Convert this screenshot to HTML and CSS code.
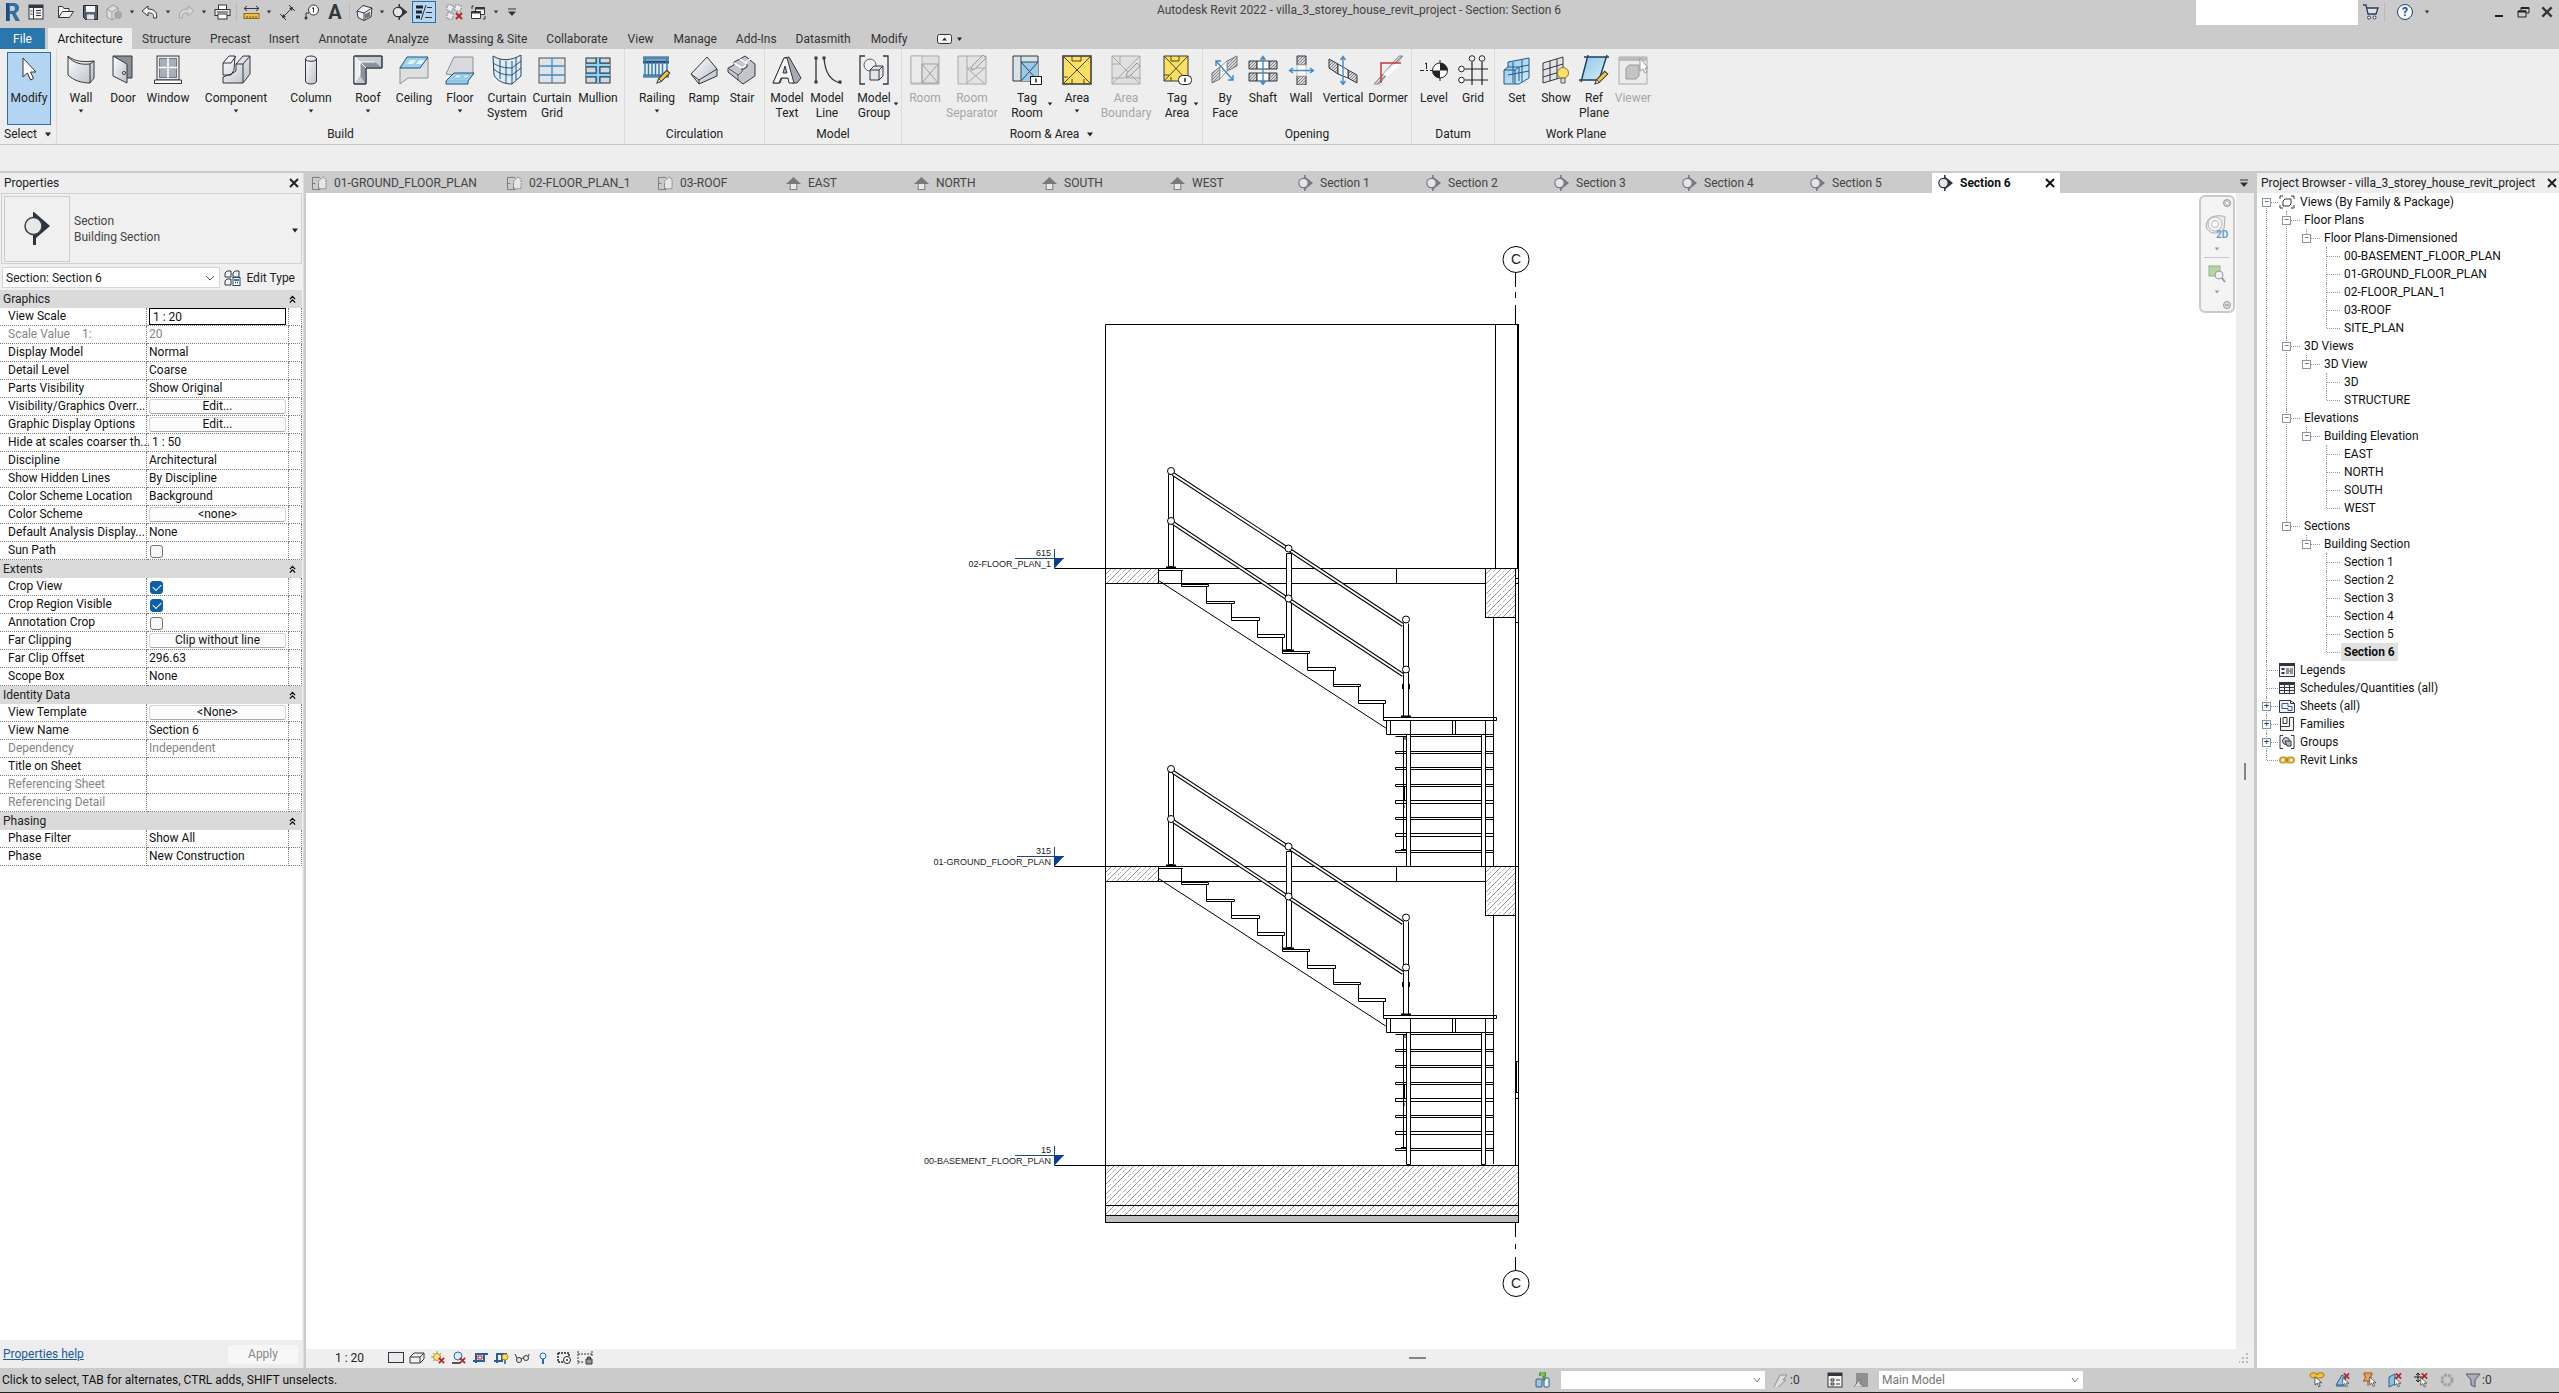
FILE: index.html
```html
<!DOCTYPE html>
<html lang="en">
<head>
<meta charset="utf-8">
<title>Autodesk Revit 2022 - villa_3_storey_house_revit_project - Section: Section 6</title>
<link rel="stylesheet" href="styles.css">
</head>
<body>
<svg class="defs" aria-hidden="true">
  <defs>
    <linearGradient id="shade" x1="0" y1="0" x2="1" y2="1"><stop offset="0" stop-color="#ffffff"/><stop offset="1" stop-color="#b9bec8"/></linearGradient>
    <linearGradient id="blue" x1="0" y1="0" x2="1" y2="1"><stop offset="0" stop-color="#8fc6e6"/><stop offset="1" stop-color="#d6ecf8"/></linearGradient>
    <pattern id="ihatch" width="3" height="3" patternUnits="userSpaceOnUse"><rect width="3" height="3" fill="#d4d6da"/><path d="M0 3L3 0" stroke="#6d7178" stroke-width=".8"/></pattern>
    <symbol id="pencil" viewBox="0 0 14 14"><path d="M1 13l1.5-4L10 1.2l2.8 2.6L5 11.500z" fill="#f6c945" stroke="#3c3c3c"/><path d="M1 13l1.500-4 2.500 2.500z" fill="#fff3c8" stroke="#3c3c3c" stroke-width=".8"/></symbol>
    <symbol id="plan" viewBox="0 0 18 16"><path d="M10 14.500H1.500v-13h8M1.500 8h3M8 8h3M8 8v6" fill="none" stroke="#77797d"/><path d="M9.500 3.500l4-2.500 2.500 3v9.500H8V6z" fill="#e6e6e6" stroke="#77797d" stroke-dasharray="2 1"/></symbol>
    <symbol id="elev" viewBox="0 0 18 16"><path d="M1 8.500L9 1l8 7.500z" fill="#77797d"/><rect x="5.500" y="8" width="7" height="6.500" fill="#e9e9e9" stroke="#77797d"/></symbol>
    <symbol id="sect" viewBox="0 0 16 16"><path d="M6.500 0H8v2l7.500 6L8 14v2H6.500z" fill="currentColor"/><circle cx="6" cy="8" r="4.700" fill="#e2e5ea" stroke="currentColor" stroke-width="1.200"/></symbol>
    <symbol id="down" viewBox="0 0 8 5"><path d="M1 .5h6L4 4.500z" fill="currentColor"/></symbol>
    <symbol id="cross" viewBox="0 0 12 12"><path d="M2 2l8 8M10 2l-8 8" stroke="currentColor" stroke-width="2" fill="none"/></symbol>
    <symbol id="redx" viewBox="0 0 8 8"><path d="M1 1l6 6M7 1L1 7" stroke="#b5242c" stroke-width="2"/></symbol>
    <symbol id="chev2" viewBox="0 0 8 9"><path d="M1 4l3-3 3 3M1 8l3-3 3 3" fill="none" stroke="#000" stroke-width="1.400"/></symbol>
    <symbol id="arrowcur" viewBox="0 0 10 16"><path d="M1 1v11l3-2.500 2 5 2-1-2-4.500h4z" fill="#fff" stroke="#333"/></symbol>
  </defs>
</svg>

<div class="app">
  <header class="titlebar">
    <div class="quick">
      <button class="q q-logo" aria-label="Revit"><svg width="16" height="20" viewBox="0 0 16 20"><path d="M2 1h7c4 0 6 2 6 5 0 2.500-1.500 4-3.500 5L16 19h-4.500L8 12H6v7H2z" fill="#2f6fa8"/><path d="M2 1h3v18H2z" fill="#1d4c7d"/><path d="M6 4v5h2.500C10.500 9 11 8 11 6.500S10.500 4 8.500 4z" fill="#cbcbcb"/></svg></button>
      <button class="q" aria-label="Home"><svg width="16" height="16" viewBox="0 0 16 16"><rect x="1" y="1" width="14" height="14" fill="#f4f4f4" stroke="#33363d"/><path d="M1 2.500h14" stroke="#33363d" stroke-width="3"/><path d="M5.500 3v12M8 6.500h5M8 9h5M8 11.500h5M2.500 7h2M2.500 10h2" stroke="#33363d"/></svg></button>
      <button class="q q-gap" aria-label="Open"><svg width="18" height="16" viewBox="0 0 18 16"><path d="M1.500 13.500v-11h4l1.500 2h5v3M1.500 13.500l4-6h11l-4 6z" fill="#f1f1f1" stroke="#33363d"/></svg></button>
      <button class="q" aria-label="Save"><svg width="17" height="17" viewBox="0 0 17 17"><path d="M1.500 1.500h14v14h-12l-2-2z" fill="#5a6070" stroke="#22252b"/><rect x="4" y="2" width="9" height="6" fill="#f7f7f7"/><rect x="5" y="10.500" width="7" height="5" fill="#dfe2e8"/></svg></button>
      <button class="q" aria-label="Synchronize"><svg width="17" height="17" viewBox="0 0 17 17"><path d="M1 5l6-4 5 3v8l-6 4-5-3z" fill="#dedede" stroke="#97999d"/><path d="M1 5l5 3v8M6 8l6-4" fill="none" stroke="#97999d"/><circle cx="12" cy="11" r="4" fill="#a6a8ab"/></svg></button>
      <button class="q-arrow" aria-label="Synchronize options"><svg width="6" height="4"><use href="#down"/></svg></button>
      <button class="q" aria-label="Undo"><svg width="18" height="14" viewBox="0 0 18 14"><path d="M7 1L1 6l6 5V8c4-.5 6 1 5.500 5h3C16.500 7 13 4 7 4z" fill="#f5f5f5" stroke="#33363d"/></svg></button>
      <button class="q-arrow" aria-label="Undo list"><svg width="6" height="4"><use href="#down"/></svg></button>
      <button class="q" aria-label="Redo"><svg width="18" height="14" viewBox="0 0 18 14"><path d="M11 1l6 5-6 5V8c-4-.5-6 1-5.500 5h-3C1.500 7 5 4 11 4z" fill="#d6d6d6" stroke="#a3a5a8"/></svg></button>
      <button class="q-arrow" aria-label="Redo list"><svg width="6" height="4"><use href="#down"/></svg></button>
      <button class="q" aria-label="Print"><svg width="17" height="16" viewBox="0 0 17 16"><rect x="4.500" y="1" width="8" height="5" fill="#fff" stroke="#33363d"/><rect x="1" y="5.500" width="15" height="6" fill="#e8e8ea" stroke="#33363d"/><rect x="4" y="10" width="9" height="5" fill="#fff" stroke="#33363d"/><path d="M3 8h11" stroke="#33363d"/></svg></button>
      <span class="q-sep"></span>
      <button class="q" aria-label="Measure"><svg width="17" height="17" viewBox="0 0 17 17"><path d="M1 4.500h15M4 2L1 4.500 4 7M13 2l3 2.500L13 7" fill="none" stroke="#33363d"/><rect x="1" y="9.500" width="15" height="5" fill="#f3bd48" stroke="#8a6a1c"/><path d="M4 12v2M7 12v2M10 12v2M13 12v2" stroke="#6b5010"/></svg></button>
      <button class="q-arrow" aria-label="Measure options"><svg width="6" height="4"><use href="#down"/></svg></button>
      <button class="q" aria-label="Aligned dimension"><svg width="17" height="17" viewBox="0 0 17 17"><path d="M1 10l6 6M10 1l6 6M4.500 12.500l8-8" stroke="#33363d" fill="none"/><path d="M3 14l1-4 3 3zM14 3l-1 4-3-3z" fill="#33363d"/></svg></button>
      <button class="q" aria-label="Tag by category"><svg width="17" height="17" viewBox="0 0 17 17"><circle cx="10.500" cy="6" r="5" fill="#fff" stroke="#33363d"/><path d="M10.500 3.500v5M9 4.500l1.500-1M6 9H3v4" fill="none" stroke="#33363d"/><circle cx="3" cy="14" r="1.500" fill="#33363d"/></svg></button>
      <button class="q q-text" aria-label="Text">A</button>
      <span class="q-sep"></span>
      <button class="q" aria-label="Default 3D view"><svg width="17" height="17" viewBox="0 0 17 17"><path d="M1 7l6-5.500L16 4l-1 9-7 3.500-6-3z" fill="#eef0f3" stroke="#33363d"/><path d="M1 7l7 2 8-5M8 9v7.500" fill="none" stroke="#33363d"/><path d="M9 10l5-2.500v5L9 15z" fill="#6f7785"/></svg></button>
      <button class="q-arrow" aria-label="3D view options"><svg width="6" height="4"><use href="#down"/></svg></button>
      <button class="q" aria-label="Section"><svg width="16" height="16"><use href="#sect"/></svg></button>
      <button class="q q-on" aria-label="Thin lines"><svg width="18" height="17" viewBox="0 0 18 17"><path d="M1 3h7M1 8h6M1 13h4" stroke="#20242c" stroke-width="3"/><path d="M11 1L6 16M12 3.500h5M11 8.500h6M10 13.500h7" stroke="#30343c" fill="none"/></svg></button>
      <button class="q q-gap" aria-label="Close inactive views"><svg width="17" height="17" viewBox="0 0 17 17"><path d="M1 1h6v6H1zM9 1h6v6H9zM1 9h6v6H1z" fill="#ededed" stroke="#83868b" stroke-dasharray="2 1"/><use href="#redx" x="9" y="8" width="8" height="8"/></svg></button>
      <button class="q" aria-label="Switch windows"><svg width="17" height="17" viewBox="0 0 17 17"><path d="M5.500 3.500h9v7h-9z" fill="#fff" stroke="#33363d"/><path d="M1.500 7.500h9v7h-9z" fill="#fff" stroke="#33363d"/><path d="M1.500 8.500h9M5 4.500h10" stroke="#33363d" stroke-width="2"/><path d="M2 5V2h2M15 12v3h-2" fill="none" stroke="#33363d"/></svg></button>
      <button class="q-arrow" aria-label="Window list"><svg width="6" height="4"><use href="#down"/></svg></button>
      <button class="q-arrow q-last" aria-label="Customize"><svg width="10" height="9" viewBox="0 0 10 9"><path d="M1 1h8" stroke="#333"/><path d="M1 3.500h8L5 8z" fill="#333"/></svg></button>
    </div>
    <h1 class="title">Autodesk Revit 2022 - villa_3_storey_house_revit_project - Section: Section 6</h1>
    <div class="winctl">
      <input class="search" type="text" aria-label="Search">
      <button class="q" aria-label="App store"><svg width="17" height="16" viewBox="0 0 17 16"><path d="M1 1h3l2 9h8l2-6H5" fill="#dfe3ec" stroke="#2c3c5c" stroke-width="1.300"/><circle cx="7" cy="13.500" r="1.500" fill="#fff" stroke="#2c3c5c"/><circle cx="12.500" cy="13.500" r="1.500" fill="#fff" stroke="#2c3c5c"/></svg></button>
      <span class="q-sep"></span>
      <button class="q help" aria-label="Help">?</button>
      <button class="q-arrow" aria-label="Help menu"><svg width="6" height="4"><use href="#down"/></svg></button>
      <span class="grow"></span>
      <button class="q" aria-label="Minimize"><svg width="12" height="12" viewBox="0 0 12 12"><path d="M2 10h8" stroke="#222" stroke-width="2"/></svg></button>
      <button class="q" aria-label="Restore"><svg width="13" height="12" viewBox="0 0 13 12"><path d="M4 4V1.500h8V7H9M1 5h8v6H1z" fill="none" stroke="#222"/><path d="M4 2h8M1 5.500h8" stroke="#222" stroke-width="2"/></svg></button>
      <button class="q" aria-label="Close"><svg width="14" height="14"><use href="#cross"/></svg></button>
    </div>
  </header>

  <nav class="menu">
    <button class="file">File</button>
    <button class="on">Architecture</button>
    <button>Structure</button><button class="tight">Precast</button><button class="tight">Insert</button><button>Annotate</button><button>Analyze</button><button class="tight">Massing &amp; Site</button><button>Collaborate</button><button>View</button><button>Manage</button><button class="tight">Add-Ins</button><button>Datasmith</button><button>Modify</button>
    <button class="collapse" aria-label="Ribbon display"><svg width="26" height="10" viewBox="0 0 26 10"><rect x=".5" y=".5" width="14" height="9" rx="2" fill="#f2f2f2" stroke="#333"/><path d="M5 6.500h5L7.500 3.500z" fill="#333"/><path d="M20 3.500h5l-2.500 3.500z" fill="#222"/></svg></button>
  </nav>

  <div class="ribbon">
    <section class="panel p-select">
      <div class="tools">
        <button class="tool modify"><svg viewBox="0 0 30 30"><path d="M9 3v19l4.500-4 3 7 3-1.500-3-6.500H22z" fill="#fff" stroke="#333"/></svg><span>Modify</span></button>
      </div>
      <h2>Select <svg width="8" height="5"><use href="#down"/></svg></h2>
    </section>
    <section class="panel p-build">
      <div class="tools">
        <button class="tool w42"><svg viewBox="0 0 30 30"><path d="M2 1c7 6 15 6 26 5v17l-4 5C15 28 7 25 2 20z" fill="url(#shade)" stroke="#33363d"/><path d="M2 2c6 6 13 8 22 7l4-3M24 9v19" fill="none" stroke="#33363d"/></svg><span>Wall</span><svg class="dd"><use href="#down"/></svg></button>
        <button class="tool w42"><svg viewBox="0 0 30 30"><path d="M5 1h19v22h-5" fill="#8b9098" stroke="#33363d"/><path d="M5 1l14 8v19L5 21z" fill="url(#shade)" stroke="#33363d"/><circle cx="16" cy="18" r="1.500" fill="#fff" stroke="#333"/></svg><span>Door</span></button>
        <button class="tool w48"><svg viewBox="0 0 30 30"><rect x="4" y="1" width="22" height="24" fill="#eceef1" stroke="#33363d"/><rect x="6.500" y="3.500" width="17" height="19" fill="#a9afb9" stroke="#70757e"/><path d="M15 3v20M6 12.500h18" stroke="#fff" stroke-width="1.500"/><path d="M1.500 25h27v3.500h-27z" fill="#fff" stroke="#33363d"/></svg><span>Window</span></button>
        <button class="tool w88"><svg viewBox="0 0 30 30"><path d="M2 8l6-7h6l-1 14-3 5H2zM15 9l7-8h7v18l-7 9H2v-6l8-3 5-3z" fill="url(#shade)" stroke="#33363d"/><path d="M15 9h7v19M22 9l7-8M2 8h8M10 8l5-7" fill="none" stroke="#33363d"/></svg><span>Component</span><svg class="dd"><use href="#down"/></svg></button>
        <button class="tool w62"><svg viewBox="0 0 30 30"><path d="M9.500 4c0-4 11-4 11 0v22c0 4-11 4-11 0z" fill="url(#shade)" stroke="#33363d"/><path d="M9.500 4c0 3 11 3 11 0" fill="none" stroke="#33363d"/></svg><span>Column</span><svg class="dd"><use href="#down"/></svg></button>
        <button class="tool w52"><svg viewBox="0 0 30 30"><path d="M1 1h28v12H13v16H1z" fill="#c6cad2" stroke="#33363d"/><path d="M1 1l6 6v14l-6 8z" fill="#edeff2"/><path d="M7 7h15l7 6H13v16l-6-8z" fill="#8b919e"/><path d="M1 1l12 12M7 7h15M7 7v14" fill="none" stroke="#fff"/><path d="M1 1h28v12H13v16H1z" fill="none" stroke="#33363d"/></svg><span>Roof</span><svg class="dd"><use href="#down"/></svg></button>
        <button class="tool w40"><svg viewBox="0 0 30 30"><path d="M1 12h19l9-9v20H9l-8 6z" fill="#dedfe1" stroke="#8b8f96"/><path d="M8 2h21l-8 11H1z" fill="#9ed0ec" stroke="#25527a"/><path d="M11 5h6l-3 4H8zM20 5h6l-3 4h-6z" fill="#e3f3fb"/></svg><span>Ceiling</span></button>
        <button class="tool w52"><svg viewBox="0 0 30 30"><path d="M1 19L9 2h19v18H9z" fill="#d9dadd" stroke="#8b8f96"/><path d="M9 18h20l-6 8v3H1v-3z" fill="#9ed0ec" stroke="#25527a"/><path d="M1 26h22M11 20h6l-3 3H9zM20 20h5l-3 3h-5z" fill="#e3f3fb" stroke="#5a9cc6" stroke-width=".5"/></svg><span>Floor</span><svg class="dd"><use href="#down"/></svg></button>
        <button class="tool w42"><svg viewBox="0 0 30 30"><path d="M1 1c8 5 18 5 28-1v21l-9 8C12 29 5 26 2 20z" fill="#dcebf5" stroke="#2d4052"/><path d="M20 6v23M8 4v20M14 6v22M24 3v22M1 8c6 4 12 5 19 5l9-7M2 14c5 5 11 6 18 6l9-7" fill="none" stroke="#25527a"/></svg><span>Curtain<br>System</span></button>
        <button class="tool w48"><svg viewBox="0 0 30 30"><rect x="2" y="3" width="26" height="25" fill="#dfe4ea" stroke="#4b4f57"/><path d="M15 3v25M2 11h26M2 20h26" stroke="#3d8ac2" stroke-width="1.300"/></svg><span>Curtain<br>Grid</span></button>
        <button class="tool w44"><svg viewBox="0 0 30 30"><rect x="3" y="3" width="24" height="25" fill="#d2d8df" stroke="#2b2f37"/><path d="M3 10h24M3 20h24M15 3v25" stroke="#1b3e5c" stroke-width="5"/><path d="M3 10h24M3 20h24M15 3v25" stroke="#8fd3ef" stroke-width="2.500"/></svg><span>Mullion</span></button>
      </div>
      <h2>Build</h2>
    </section>
    <section class="panel p-circ">
      <div class="tools">
        <button class="tool w46"><svg viewBox="0 0 30 30"><path d="M1 3h26M1 7h26M1 21h26" stroke="#1f4f7a" stroke-width="3"/><path d="M1 3h26M1 21h26" stroke="#7fc0e4"/><path d="M3 3v18M6.500 7v14M10 7v14M13.500 7v14M17 7v14M20.500 7v14M25 3v18" stroke="#2f7db5" stroke-width="1.500"/><use href="#pencil" x="14" y="14" width="15" height="15"/></svg><span>Railing</span><svg class="dd"><use href="#down"/></svg></button>
        <button class="tool w48"><svg viewBox="0 0 30 30"><path d="M2 19L18 2l10 12v7L10 29z" fill="url(#shade)" stroke="#33363d"/><path d="M10 25l18-11M10 25v4M2 19l8 6" fill="none" stroke="#33363d"/></svg><span>Ramp</span></button>
        <button class="tool w28"><svg viewBox="0 0 30 30"><path d="M1 13l6-3V7l6-3 5-3 10 8v12l-12 8L1 17z" fill="#c2c5cc" stroke="#33363d"/><path d="M1 13l10 7 4-3v-4l4-3V7l4-3M7 8l8 5M13 4l7 5M11 20v4" fill="none" stroke="#fff" stroke-width="1.500"/><path d="M1 13l10 7v5M15 13v4l-4 3M20 9v3l-5 3" fill="none" stroke="#33363d"/></svg><span>Stair</span></button>
      </div>
      <h2>Circulation</h2>
    </section>
    <section class="panel p-model">
      <div class="tools">
        <button class="tool w40"><svg viewBox="0 0 30 30"><path d="M1 28L12 3l5-1 12 21-4 5h-5l-2-5h-8l-2 5z" fill="#a7abb5" stroke="#33363d"/><path d="M1 28L12 3h3l7 25h-5l-1-5H9l-2 5zM11 18h4l-2-7z" fill="#f7f7f8" stroke="#33363d" fill-rule="evenodd"/></svg><span>Model<br>Text</span></button>
        <button class="tool w40"><svg viewBox="0 0 30 30"><path d="M4 3v24M12 3c1 14 6 23 17 25" fill="none" stroke="#33363d" stroke-width="1.300"/><path d="M2.500 1.500h3v3h-3zM2.500 25.500h3v3h-3zM10.500 1.500h3v3h-3zM26.500 25.500h3v3h-3z" fill="#33363d"/></svg><span>Model<br>Line</span></button>
        <button class="tool w54 side"><svg viewBox="0 0 30 30"><path d="M6 1H1v28h5M24 1h5v28h-5" fill="none" stroke="#33363d" stroke-width="1.300"/><circle cx="11" cy="10" r="6" fill="#eef0f2" stroke="#5c6068"/><path d="M11 15l4-4h9v10l-4 4h-9z" fill="#e3e5e9" stroke="#33363d"/><path d="M11 15h9v10M20 15l4-4" fill="none" stroke="#33363d"/></svg><span>Model<br>Group</span><svg class="dd"><use href="#down"/></svg></button>
      </div>
      <h2>Model</h2>
    </section>
    <section class="panel p-room">
      <div class="tools">
        <button class="tool w40" disabled><svg viewBox="0 0 30 30"><path d="M1 1h28v28H1z" fill="#e0e0e0" stroke="#a9a9a9"/><path d="M1 1h11v27H1z" fill="#ebebeb" stroke="#b5b5b5"/><path d="M12 9h16v19H12zM12 9l16 19M28 9L12 28" fill="none" stroke="#9f9f9f"/></svg><span>Room</span></button>
        <button class="tool w54" disabled><svg viewBox="0 0 30 30"><path d="M1 1h28v28H1z" fill="#e3e3e3" stroke="#a9a9a9"/><path d="M10 1v28M10 13h18M10 13l18 16M28 13L10 28" fill="none" stroke="#a9a9a9"/><path d="M14 15l1-4L26 0l3 3-11 11z" fill="#ddd" stroke="#999"/></svg><span>Room<br>Separator</span></button>
        <button class="tool w56 side"><svg viewBox="0 0 30 30"><path d="M1 1h25v25H1z" fill="#dbe2e8" stroke="#33363d"/><path d="M9 7h17v19H9z" fill="#9cc9e4"/><path d="M9 1v25M9 7h17M9 7l17 19M26 7L9 26" fill="none" stroke="#2c4a63"/><rect x="18.500" y="21.500" width="11" height="8" fill="#fff" stroke="#222"/><path d="M24 23.500v4" stroke="#222" stroke-width="1.500"/></svg><span>Tag<br>Room</span><svg class="dd"><use href="#down"/></svg></button>
        <button class="tool w44"><svg viewBox="0 0 30 30"><path d="M1 1h28v28H1z" fill="#fadf63" stroke="#33363d" stroke-width="1.500"/><path d="M1 1l28 28M29 1L1 29M10 1v5h9M19 1v5M1 22h5M10 24v5M22 29v-5" fill="none" stroke="#4f461d"/></svg><span>Area</span><svg class="dd"><use href="#down"/></svg></button>
        <button class="tool w54" disabled><svg viewBox="0 0 30 30"><path d="M1 1h28v28H1z" fill="#e0e0e0" stroke="#a9a9a9"/><path d="M1 1l28 28M29 1L1 29M9 1v8H1M1 23h28" fill="none" stroke="#a9a9a9"/><path d="M15 22l1-4L26 8l3 3-10 10z" fill="#ddd" stroke="#999"/></svg><span>Area<br>Boundary</span></button>
        <button class="tool w48 side"><svg viewBox="0 0 30 30"><path d="M2 1h24v25H2z" fill="#fadf63" stroke="#33363d"/><path d="M2 1l24 25M26 1L2 26M9 1v5h8V1M2 20h5M9 26v-4" fill="none" stroke="#4f461d"/><rect x="16.500" y="20.500" width="13" height="9" rx="4" fill="#fff" stroke="#222"/><path d="M23 23v4" stroke="#222" stroke-width="1.500"/></svg><span>Tag<br>Area</span><svg class="dd"><use href="#down"/></svg></button>
      </div>
      <h2>Room &amp; Area <svg width="8" height="5"><use href="#down"/></svg></h2>
    </section>
    <section class="panel p-open">
      <div class="tools">
        <button class="tool w40"><svg viewBox="0 0 30 30"><path d="M2 28V18l8-6v12zM17 16V6l10-5v10z" fill="url(#ihatch)" stroke="#70747b"/><path d="M10 12l7-6v10l-7 8z" fill="#fff" stroke="#999"/><path d="M6 6l17 19M6 11V6h5M23 20v5h-5" fill="none" stroke="#3f8cc9" stroke-width="1.400"/></svg><span>By<br>Face</span></button>
        <button class="tool w36"><svg viewBox="0 0 30 30"><path d="M1 6h8v8H1zM21 6h8v8h-8zM1 18h8v8H1zM21 18h8v8h-8z" fill="url(#ihatch)" stroke="#33363d"/><path d="M9 6h12v8H9zM9 18h12v8H9z" fill="#fff" stroke="#33363d"/><path d="M15 2v27M12.500 5L15 1.500 17.500 5M12.500 26l2.500 3.500 2.500-3.500" fill="none" stroke="#3f8cc9" stroke-width="1.400"/></svg><span>Shaft</span></button>
        <button class="tool w40"><svg viewBox="0 0 30 30"><path d="M11 1h9v9h-9zM11 21h9v9h-9z" fill="url(#ihatch)" stroke="#33363d"/><path d="M11 10h9v11h-9z" fill="#fff" stroke="#bbb"/><path d="M4 15.500h23M7 13l-3.500 2.500L7 18M24 13l3.500 2.500L24 18" fill="none" stroke="#3f8cc9" stroke-width="1.400"/></svg><span>Wall</span></button>
        <button class="tool w44"><svg viewBox="0 0 30 30"><path d="M1 4l9 5v10l-9-6zM20 15l9 5v8l-9-5z" fill="url(#ihatch)" stroke="#33363d"/><path d="M10 9l10 6v8l-10-4z" fill="#fff" stroke="#33363d"/><path d="M15 2v26M12.500 5L15 1.500 17.500 5M12.500 26l2.500 3.500 2.500-3.500" fill="none" stroke="#3f8cc9" stroke-width="1.400"/></svg><span>Vertical</span></button>
        <button class="tool w46"><svg viewBox="0 0 30 30"><path d="M1 29L26 1h4L6 29z" fill="url(#ihatch)" stroke="#8b8f96"/><path d="M10 19L22 8h6L14 22z" fill="#fff"/><path d="M8 28V8h20" fill="none" stroke="#c23a38" stroke-width="1.500"/></svg><span>Dormer</span></button>
      </div>
      <h2>Opening</h2>
    </section>
    <section class="panel p-datum">
      <div class="tools">
        <button class="tool w40"><svg viewBox="0 0 30 30"><path d="M1 15.500h4M7 15.500h2M11 15.500h18M6 9l1.500-1V14M21 5v21" fill="none" stroke="#222"/><circle cx="21" cy="15.500" r="7.500" fill="#fff" stroke="#222"/><path d="M21 8v15a7.500 7.500 0 0 1-7.500-7.500h15A7.500 7.500 0 0 0 21 8z" fill="#222"/></svg><span>Level</span></button>
        <button class="tool w38"><svg viewBox="0 0 30 30"><path d="M14 7v23M24 7v23M7 14h23M7 25h23" stroke="#222" stroke-width="1.200"/><g fill="#fff" stroke="#222"><circle cx="14" cy="3.500" r="2.800"/><circle cx="24" cy="3.500" r="2.800"/><circle cx="3.500" cy="14" r="2.800"/><circle cx="3.500" cy="25" r="2.800"/></g></svg><span>Grid</span></button>
      </div>
      <h2>Datum</h2>
    </section>
    <section class="panel p-work">
      <div class="tools">
        <button class="tool w40"><svg viewBox="0 0 30 30"><path d="M2 15l4-3V7l21-4v20l-10 6H2z" fill="url(#blue)" stroke="#1f5b88"/><path d="M2 15h11v14M13 15l4-3v14M6 12h11l10-2M6 20l21-4M11 7v21M20 5v22" fill="none" stroke="#1f5b88"/></svg><span>Set</span></button>
        <button class="tool w38"><svg viewBox="0 0 30 30"><path d="M2 8l20-6v20L2 28z" fill="#e3e4e8" stroke="#33363d"/><path d="M9 6v20M16 4v20M2 15l20-6M2 22l20-6" stroke="#33363d"/><circle cx="22" cy="18" r="5.500" fill="#ffe16a" stroke="#8d7a24"/><path d="M20 23h4v5h-4z" fill="#ddd" stroke="#555"/></svg><span>Show</span></button>
        <button class="tool w38"><svg viewBox="0 0 30 30"><path d="M8 2h20L21 25H2z" fill="url(#blue)"/><path d="M9 0L2 27M28 0l-7 22M5 2h25M0 25h18" fill="none" stroke="#1d3f5c" stroke-width="1.400"/><use href="#pencil" x="15" y="15" width="15" height="15"/></svg><span>Ref<br>Plane</span></button>
        <button class="tool w40" disabled><svg viewBox="0 0 30 30"><path d="M1 2h28v27H1z" fill="#ececec" stroke="#a9a9a9"/><path d="M1 4h28" stroke="#bcbcbc" stroke-width="4"/><path d="M8 13l3-3h10v11l-3 3H8z" fill="#c4c4c4" stroke="#999"/><path d="M22 3v13l3-2 2 4 2-1-2-4h3z" fill="#fff" stroke="#999"/></svg><span>Viewer</span></button>
      </div>
      <h2>Work Plane</h2>
    </section>
  </div>
  <div class="options"></div>

  <main class="work">
    <aside class="props">
      <header class="phead"><h2>Properties</h2><button aria-label="Close properties"><svg width="12" height="12"><use href="#cross"/></svg></button></header>
      <div class="type">
        <div class="thumb"><svg width="32" height="34" viewBox="0 0 32 34"><path d="M10 0l16 14-14 12v7h-3V0z" fill="#2f333b"/><circle cx="9.500" cy="14" r="8.500" fill="#e6e8ec" stroke="#3b3f47" stroke-width="1.500"/></svg></div>
        <p>Section<br>Building Section</p>
        <button aria-label="Type list"><svg width="8" height="5"><use href="#down"/></svg></button>
      </div>
      <div class="inst">
        <div class="combo"><select aria-label="Instance"><option>Section: Section 6</option></select><svg width="10" height="6" viewBox="0 0 10 6"><path d="M1 1l4 4 4-4" fill="none" stroke="#555"/></svg></div>
        <button><svg width="17" height="16" viewBox="0 0 17 16"><path d="M1 3l2-2h4v6H1zM9 3l2-2h4v6H9zM1 11l2-2h4v6H1z" fill="#f3f3f3" stroke="#33363d"/><rect x="9" y="7.500" width="7" height="8" fill="#fff" stroke="#1d4c7d"/><path d="M10 10h5M11 12.500h1M13 12.500h1" stroke="#1d4c7d" stroke-width="1.500"/></svg>Edit Type</button>
      </div>
      <div class="grid">
        <table>
          <colgroup><col class="c-name"><col><col class="c-end"></colgroup>
          <tbody>
            <tr class="grp"><th colspan="3">Graphics <svg width="7" height="9"><use href="#chev2"/></svg></th></tr>
            <tr><td><label for="p1">View Scale</label></td><td><input class="boxed" id="p1" type="text" value="1 : 20"></td><td></td></tr>
            <tr class="dim"><td>Scale Value &nbsp;&nbsp; 1:</td><td>20</td><td></td></tr>
            <tr><td>Display Model</td><td>Normal</td><td></td></tr>
            <tr><td>Detail Level</td><td>Coarse</td><td></td></tr>
            <tr><td>Parts Visibility</td><td>Show Original</td><td></td></tr>
            <tr><td>Visibility/Graphics Overr...</td><td><button>Edit...</button></td><td></td></tr>
            <tr><td>Graphic Display Options</td><td><button>Edit...</button></td><td></td></tr>
            <tr><td>Hide at scales coarser th...</td><td class="in">1 : 50</td><td></td></tr>
            <tr><td>Discipline</td><td>Architectural</td><td></td></tr>
            <tr><td>Show Hidden Lines</td><td>By Discipline</td><td></td></tr>
            <tr><td>Color Scheme Location</td><td>Background</td><td></td></tr>
            <tr><td>Color Scheme</td><td><button>&lt;none&gt;</button></td><td></td></tr>
            <tr><td>Default Analysis Display...</td><td>None</td><td></td></tr>
            <tr><td><label for="c1">Sun Path</label></td><td><input id="c1" type="checkbox"></td><td></td></tr>
          </tbody>
          <tbody>
            <tr class="grp"><th colspan="3">Extents <svg width="7" height="9"><use href="#chev2"/></svg></th></tr>
            <tr><td><label for="c2">Crop View</label></td><td><input id="c2" type="checkbox" checked></td><td></td></tr>
            <tr><td><label for="c3">Crop Region Visible</label></td><td><input id="c3" type="checkbox" checked></td><td></td></tr>
            <tr><td><label for="c4">Annotation Crop</label></td><td><input id="c4" type="checkbox"></td><td></td></tr>
            <tr><td>Far Clipping</td><td><button>Clip without line</button></td><td></td></tr>
            <tr><td>Far Clip Offset</td><td>296.63</td><td></td></tr>
            <tr><td>Scope Box</td><td>None</td><td></td></tr>
          </tbody>
          <tbody>
            <tr class="grp"><th colspan="3">Identity Data <svg width="7" height="9"><use href="#chev2"/></svg></th></tr>
            <tr><td>View Template</td><td><button>&lt;None&gt;</button></td><td></td></tr>
            <tr><td>View Name</td><td>Section 6</td><td></td></tr>
            <tr class="dim"><td>Dependency</td><td>Independent</td><td></td></tr>
            <tr><td>Title on Sheet</td><td></td><td></td></tr>
            <tr class="dim"><td>Referencing Sheet</td><td></td><td></td></tr>
            <tr class="dim"><td>Referencing Detail</td><td></td><td></td></tr>
          </tbody>
          <tbody>
            <tr class="grp"><th colspan="3">Phasing <svg width="7" height="9"><use href="#chev2"/></svg></th></tr>
            <tr><td>Phase Filter</td><td>Show All</td><td></td></tr>
            <tr><td>Phase</td><td>New Construction</td><td></td></tr>
          </tbody>
        </table>
      </div>
      <footer class="pfoot"><a href="#help">Properties help</a><button disabled>Apply</button></footer>
    </aside>

    <section class="view">
      <div class="tabs">
        <button class="t1"><svg width="17" height="15"><use href="#plan"/></svg>01-GROUND_FLOOR_PLAN</button>
        <button class="t2"><svg width="17" height="15"><use href="#plan"/></svg>02-FLOOR_PLAN_1</button>
        <button><svg width="17" height="15"><use href="#plan"/></svg>03-ROOF</button>
        <button><svg width="17" height="15"><use href="#elev"/></svg>EAST</button>
        <button><svg width="17" height="15"><use href="#elev"/></svg>NORTH</button>
        <button><svg width="17" height="15"><use href="#elev"/></svg>SOUTH</button>
        <button><svg width="17" height="15"><use href="#elev"/></svg>WEST</button>
        <button><svg width="17" height="16"><use href="#sect"/></svg>Section 1</button>
        <button><svg width="17" height="16"><use href="#sect"/></svg>Section 2</button>
        <button><svg width="17" height="16"><use href="#sect"/></svg>Section 3</button>
        <button><svg width="17" height="16"><use href="#sect"/></svg>Section 4</button>
        <button><svg width="17" height="16"><use href="#sect"/></svg>Section 5</button>
        <button class="on"><svg width="17" height="16"><use href="#sect"/></svg>Section 6<svg class="x" width="12" height="12"><use href="#cross"/></svg></button>
        <button class="more" aria-label="Tab list"><svg width="10" height="9" viewBox="0 0 10 9"><path d="M1 1h8" stroke="#333"/><path d="M1 3.500h8L5 8z" fill="#333"/></svg></button>
      </div>
      <div class="stage">
        <div class="canvas">
          <svg class="drawing" viewBox="306 193 1930 1156" role="img" aria-label="Section 6 through the staircase">
            <defs>
              <pattern id="hatch" width="10" height="10" patternUnits="userSpaceOnUse">
                <path d="M-2.500 2.500l5-5M0 10L10 0M7.500 12.500l5-5" stroke="#777" stroke-width=".8"/>
                <path d="M-1 6L6 -1M4 11l7-7" stroke="#999" stroke-width=".8" stroke-dasharray="3 2"/>
              </pattern>
              <g id="storey">
                <path d="M1105.500 568.500H1518M1105.500 583.500H1485.500M1396.500 568.500V583.500"/>
                <rect x="1105.500" y="568.500" width="53" height="15" fill="url(#hatch)"/>
                <rect x="1485.500" y="568.500" width="30" height="49" fill="url(#hatch)"/>
                <path d="M1158.500 570.500v10M1158.500 570.500H1183M1181.500 570.500V586"/>
                <path d="M1158.500 580.500L1386.500 728.500"/>
                <path fill="#fff" d="M1181.500 584.500h27v2h-27zM1206.500 601.500h28v2h-28zM1231.500 617.500h28v3h-28zM1257.500 634.500h27v3h-27zM1282.500 651.500h27v2h-27zM1307.500 667.500h28v3h-28zM1333.500 684.500h27v2h-27zM1358.500 700.500h27v3h-27z"/>
                <path d="M1206.500 587v15M1231.500 604v14M1257.500 620v15M1282.500 637v15M1307.500 654v14M1333.500 670v15M1358.500 687v14M1383.500 703v15"/>
                <path d="M1166 567.500h10M1283 650.500h11M1401 716.500h10" stroke-width="2"/>
                <path fill="#fff" d="M1168.500 474.500h5v92h-5zM1286.500 553.500h5v96h-5z"/>
                <path d="M1403.500 623.500v93M1408.500 623.500v93M1402.500 684v5M1409.500 684v5"/>
                <g class="rail"><path d="M1173 474L1288 549L1403 625M1173 523L1288 599L1403 675"/><path class="core" d="M1173 474L1288 549L1403 625M1173 523L1288 599L1403 675"/></g>
                <g fill="#fff"><circle cx="1171" cy="471" r="3.500"/><circle cx="1171" cy="521" r="3.500"/><circle cx="1288.500" cy="548.500" r="3.500"/><circle cx="1288.500" cy="598.500" r="3.500"/><circle cx="1406" cy="619.500" r="3.500"/><circle cx="1406" cy="669.500" r="3.500"/></g>
                <path d="M1383.500 717.500H1496.500v3H1383.500zM1386.500 720.500h107v14h-107zM1390.500 720.500v14M1410.500 720.500v14M1452.500 720.500v14M1455.500 720.500v14M1485.500 720.500v14"/>
                <path d="M1493.500 617.500V866M1395.500 736.500h98"/>
                <path d="M1493.500 751.500h-98v2h98M1493.500 767.500h-98v2h98M1493.500 784.500h-98v2h98M1493.500 800.500h-98v3h98M1493.500 817.500h-98v2h98M1493.500 833.500h-98v3h98M1493.500 850.500h-98v2h98"/>
                <path d="M1403.500 737V850M1404.500 787v14M1405 736v4M1404 805v3M1401 849.500h5"/>
                <path fill="#fff" d="M1406.500 734.500h4v132h-4zM1481.500 734.500h4v132h-4z"/>
              </g>
            </defs>
            <g class="ink">
              <path d="M1105.500 1165V324.500H1518.500M1495.500 324.500V568"/>
              <path d="M1518 324V568" stroke-width="2"/>
              <path d="M1515.500 568V1165M1518.500 568V1222M1515 578.500h4M1515 583.500h4M1515 622.500h4"/>
              <use href="#storey"/>
              <use href="#storey" y="298"/>
              <path d="M1516.500 1062v30M1515 1061.500h4M1515 1092.500h4M1515 1098.500h4"/>
              <rect x="1105.500" y="1165.500" width="413" height="40" fill="url(#hatch)"/>
              <rect x="1105.500" y="1205.500" width="413" height="10" fill="url(#hatch)"/>
              <rect x="1105.500" y="1215.500" width="413" height="7" fill="#bfbfbf"/>
              <path d="M1515.500 273v14M1515.500 292v6M1515.500 305v19M1515.500 1222v15M1515.500 1244v5M1515.500 1257v13"/>
              <circle cx="1516" cy="259.500" r="13"/><circle cx="1516" cy="1283.500" r="13"/>
              <path d="M1054.500 568.500H1105M1054.500 866.500H1105M1054.500 1165.500H1105"/>
            </g>
            <g class="heads">
              <path d="M1015 558.500h49M1054.500 549v19M1017 856.500h47M1054.500 847v19M1015 1155.500h49M1054.500 1146v19"/>
              <path class="solid" d="M1054 558h10l-10 11zM1054 856h10l-10 11zM1054 1155h10l-10 11z"/>
              <path class="cut" d="M1063 560l-6 7M1063 858l-6 7M1063 1157l-6 7"/>
            </g>
            <g class="lvl">
              <text x="1051" y="556">615</text><text x="1051" y="567">02-FLOOR_PLAN_1</text>
              <text x="1051" y="854">315</text><text x="1051" y="865">01-GROUND_FLOOR_PLAN</text>
              <text x="1051" y="1153">15</text><text x="1051" y="1164">00-BASEMENT_FLOOR_PLAN</text>
            </g>
            <g class="bub"><text x="1516" y="264">C</text><text x="1516" y="1288">C</text></g>
          </svg>
          <div class="navbar">
            <button class="r" aria-label="Close navigation bar"><svg width="8" height="8" viewBox="0 0 8 8"><circle cx="4" cy="4" r="3.500" fill="#ccc" stroke="#999"/><path d="M2.500 2.500l3 3M5.500 2.500l-3 3" stroke="#fff"/></svg></button>
            <button aria-label="Steering wheel"><svg width="26" height="26" viewBox="0 0 26 26"><path d="M4 6c3-5 14-5 17-3l-1 12c-3 5-13 5-15 2-4-3-3-8-1-11z" fill="#ececee" stroke="#a9acb2"/><circle cx="11" cy="10" r="7" fill="#f6f6f6" stroke="#b2b5bb"/><circle cx="11" cy="10" r="3.500" fill="#fff" stroke="#b2b5bb"/><text x="12" y="24" class="two">2D</text></svg></button>
            <button aria-label="Steering wheel options"><svg width="6" height="4"><use href="#down"/></svg></button>
            <hr>
            <button aria-label="Zoom in region"><svg width="18" height="18" viewBox="0 0 18 18"><rect x="1" y="1" width="11" height="10" fill="#b4d6a5" stroke="#90b383"/><circle cx="11" cy="10" r="4" fill="#f0f3f6" stroke="#9499a3"/><path d="M14 13l3 4" stroke="#9499a3" stroke-width="2"/></svg></button>
            <button aria-label="Zoom options"><svg width="6" height="4"><use href="#down"/></svg></button>
            <button class="r" aria-label="Customize navigation bar"><svg width="8" height="8" viewBox="0 0 8 8"><circle cx="4" cy="4" r="3.500" fill="#ddd" stroke="#999"/><path d="M2 4h4" stroke="#888"/></svg></button>
          </div>
        </div>
        <div class="vscroll"><span></span></div>
      </div>
      <div class="viewbar">
        <span class="scale">1 : 20</span>
        <button aria-label="Detail level"><svg viewBox="0 0 16 14"><rect x=".5" y="1.500" width="15" height="10" fill="#e9ebee" stroke="#33363d"/></svg></button>
        <button aria-label="Visual style"><svg viewBox="0 0 16 14"><path d="M1 6l4-4h10v6l-4 4H1zM1 6h10v6M11 6l4-4" fill="#f1f1f1" stroke="#33363d"/></svg></button>
        <button aria-label="Sun path off"><svg viewBox="0 0 16 14"><circle cx="7" cy="6" r="3.500" fill="#ffe38a" stroke="#b58f1c"/><path d="M7 0v2M1 6h2M3 2l1 1M11 2l-1 1M3 10l1-1" stroke="#b58f1c"/><use href="#redx" x="8" y="6" width="7" height="7"/></svg></button>
        <button aria-label="Shadows off"><svg viewBox="0 0 16 14"><circle cx="7" cy="5" r="4" fill="#dfe9f3" stroke="#3569a3"/><path d="M1 12h8" stroke="#555" stroke-width="2"/><use href="#redx" x="8" y="6" width="7" height="7"/></svg></button>
        <button aria-label="Crop view"><svg viewBox="0 0 16 14"><path d="M4 12V3h12M1 10h11V3" fill="none" stroke="#2a5f96" stroke-width="2"/><path d="M6 5h4v3H6z" fill="#fff" stroke="#b5242c"/></svg></button>
        <button aria-label="Show crop region"><svg viewBox="0 0 16 14"><path d="M4 12V3h10M1 10h8V4" fill="none" stroke="#2a5f96" stroke-width="2"/><circle cx="12" cy="6" r="3" fill="#ffd86a" stroke="#b58f1c"/><path d="M12 9v4" stroke="#777" stroke-width="2"/></svg></button>
        <button aria-label="Temporary hide/isolate"><svg viewBox="0 0 16 14"><path d="M1 3l3 6M6 9l4-3M15 3c0 2-1 3-2 3" stroke="#33363d" fill="none"/><circle cx="5" cy="9" r="2.500" fill="#e7edf3" stroke="#33363d"/><circle cx="12" cy="7" r="2.500" fill="#e7edf3" stroke="#33363d"/></svg></button>
        <button aria-label="Reveal hidden elements"><svg viewBox="0 0 16 14"><circle cx="8" cy="5" r="3" fill="#e3f0fa" stroke="#2a6cab"/><path d="M8 8v5" stroke="#2a6cab" stroke-width="2"/></svg></button>
        <button aria-label="Temporary view properties"><svg viewBox="0 0 16 14"><path d="M2 2h11v3M2 2v9h5" fill="none" stroke="#222" stroke-width="1.500" stroke-dasharray="2 1"/><circle cx="11" cy="9" r="3.500" fill="#fff" stroke="#222"/><circle cx="11" cy="9" r="1" fill="#222"/></svg></button>
        <button aria-label="Reveal constraints"><svg viewBox="0 0 16 14"><path d="M1 0v13M15 0v5M1 3h14M1 11h6" stroke="#33363d" stroke-dasharray="2 1" fill="none"/><path d="M9 8h6v5H9zM10.500 8V6h3v2" fill="#999" stroke="#33363d"/></svg></button>
        <span class="hthumb"></span>
        <svg class="grip" width="10" height="10" viewBox="0 0 10 10"><path d="M7 0h2v2H7zM7 4h2v2H7zM3 4h2v2H3zM7 8h2v2H7zM3 8h2v2H3zM0 8h1v2H0z" fill="#b9b9b9"/></svg>
      </div>
    </section>

    <aside class="browser">
      <header class="phead"><h2>Project Browser - villa_3_storey_house_revit_project</h2><button aria-label="Close browser"><svg width="12" height="12"><use href="#cross"/></svg></button></header>
      <ul class="tree">
        <li><button class="ex" aria-label="Collapse">−</button><svg class="ti" viewBox="0 0 16 14"><path d="M4 1H1v3M12 1h3v3M4 13H1v-3M12 13h3v-3" fill="none" stroke="#33363d"/><path d="M4 6l2-2h6v5l-2 2H4z" fill="#fff" stroke="#33363d"/></svg><span>Views (By Family &amp; Package)</span>
          <ul>
            <li><button class="ex" aria-label="Collapse">−</button><span>Floor Plans</span>
              <ul><li><button class="ex" aria-label="Collapse">−</button><span>Floor Plans-Dimensioned</span>
                <ul><li><span>00-BASEMENT_FLOOR_PLAN</span></li><li><span>01-GROUND_FLOOR_PLAN</span></li><li><span>02-FLOOR_PLAN_1</span></li><li><span>03-ROOF</span></li><li><span>SITE_PLAN</span></li></ul></li></ul></li>
            <li><button class="ex" aria-label="Collapse">−</button><span>3D Views</span>
              <ul><li><button class="ex" aria-label="Collapse">−</button><span>3D View</span>
                <ul><li><span>3D</span></li><li><span>STRUCTURE</span></li></ul></li></ul></li>
            <li><button class="ex" aria-label="Collapse">−</button><span>Elevations</span>
              <ul><li><button class="ex" aria-label="Collapse">−</button><span>Building Elevation</span>
                <ul><li><span>EAST</span></li><li><span>NORTH</span></li><li><span>SOUTH</span></li><li><span>WEST</span></li></ul></li></ul></li>
            <li><button class="ex" aria-label="Collapse">−</button><span>Sections</span>
              <ul><li><button class="ex" aria-label="Collapse">−</button><span>Building Section</span>
                <ul><li><span>Section 1</span></li><li><span>Section 2</span></li><li><span>Section 3</span></li><li><span>Section 4</span></li><li><span>Section 5</span></li><li><span class="cur">Section 6</span></li></ul></li></ul></li>
          </ul></li>
        <li><svg class="ti" viewBox="0 0 16 14"><rect x=".5" y=".5" width="15" height="13" fill="#f1f2f4" stroke="#33363d"/><path d="M1 2h14" stroke="#33363d" stroke-width="2"/><path d="M2.500 5h3v2h-3zM2.500 9h3v2h-3z" fill="#33363d"/><path d="M7 6h3M11 6h3M7 8h7M7 10h3M11 10h3" stroke="#33363d"/></svg><span>Legends</span></li>
        <li><svg class="ti" viewBox="0 0 16 14"><rect x=".5" y="1.500" width="15" height="11" fill="#f1f2f4" stroke="#33363d"/><path d="M1 3h14" stroke="#33363d" stroke-width="2"/><path d="M1 6.500h14M1 9.500h14M5.500 4v8M10.500 4v8" stroke="#33363d"/></svg><span>Schedules/Quantities (all)</span></li>
        <li><button class="ex" aria-label="Expand">+</button><svg class="ti" viewBox="0 0 16 14"><path d="M.5 1.500h11l4 3v9H.5zM11.500 1.500v3h4" fill="#f1f2f4" stroke="#33363d"/><path d="M3 4.500h6v3h4v4H9v-2H3z" fill="none" stroke="#3b5b86"/></svg><span>Sheets (all)</span></li>
        <li><button class="ex" aria-label="Expand">+</button><svg class="ti" viewBox="0 0 16 14"><path d="M1.500.5v13h13V.5h-4v9h-9M4 .5h4v6H4z" fill="#f1f2f4" stroke="#33363d"/></svg><span>Families</span></li>
        <li><button class="ex" aria-label="Expand">+</button><svg class="ti" viewBox="0 0 16 14"><path d="M4 .5H1v13h3M12 .5h3v13h-3" fill="none" stroke="#33363d"/><circle cx="7" cy="6" r="3.500" fill="#cdd1d8" stroke="#33363d"/><path d="M6 6h6v5H8z" fill="#b5bac4" stroke="#33363d"/></svg><span>Groups</span></li>
        <li><svg class="ti" viewBox="0 0 16 14"><rect x="1" y="4.500" width="7" height="5" rx="2.500" fill="none" stroke="#d39a1c" stroke-width="2"/><rect x="8" y="4.500" width="7" height="5" rx="2.500" fill="none" stroke="#d39a1c" stroke-width="2"/><path d="M5 7h6" stroke="#8a6310"/></svg><span>Revit Links</span></li>
      </ul>
    </aside>
  </main>

  <footer class="status">
    <p>Click to select, TAB for alternates, CTRL adds, SHIFT unselects.</p>
    <button class="s" aria-label="Worksets"><svg viewBox="0 0 16 16"><rect x="1" y="7" width="6" height="8" rx="1" fill="#9cc7e4" stroke="#2a5f8c"/><rect x="9" y="6" width="5" height="9" rx="1" fill="#e7f1f8" stroke="#2a5f8c"/><path d="M5 4a3 3 0 1 1 5 0v4H8V4" fill="#7dc05b" stroke="#3c7a25"/></svg></button>
    <div class="combo"><select aria-label="Active workset"><option></option></select><svg width="8" height="5" viewBox="0 0 8 5"><path d="M1 0l3 4 3-4" fill="none" stroke="#888"/></svg></div>
    <button class="s wide requests" aria-label="Editing requests"><svg viewBox="0 0 16 16"><path d="M1 15L7 3h7l-4 5h3L5 15" fill="#dedede" stroke="#8f9194"/></svg>:0</button>
    <button class="s" aria-label="Design options"><svg viewBox="0 0 16 16"><rect x="1" y="1" width="14" height="14" fill="#f4f4f4" stroke="#33363d"/><path d="M1 2.500h14" stroke="#33363d" stroke-width="3"/><path d="M4 7h3v2H4zM4 11h3v2H4z" fill="none" stroke="#33363d"/><path d="M9 8h4M9 12h4" stroke="#33363d"/></svg></button>
    <button class="s" aria-label="Exclude options"><svg viewBox="0 0 16 16"><path d="M3 1h12v14H3z" fill="#8e9093"/><path d="M1 15l6-8v5l4 2" fill="#ddd" stroke="#777"/></svg></button>
    <div class="combo"><select aria-label="Design option"><option>Main Model</option></select><svg width="8" height="5" viewBox="0 0 8 5"><path d="M1 0l3 4 3-4" fill="none" stroke="#888"/></svg></div>
    <div class="filters">
      <button class="s" aria-label="Select links"><svg viewBox="0 0 16 16"><path d="M1 3a3 2 0 0 1 7 0 3 2 0 0 1 7 0c0 3-3 3-7 3S1 6 1 3z" fill="#f0c13a" stroke="#a77a12"/><use href="#arrowcur" x="5" y="4" width="8" height="12"/></svg></button>
      <button class="s" aria-label="Select underlay"><svg viewBox="0 0 16 16"><path d="M1 13L7 3l4 3-3 7zM1 14h9" fill="#8fbfe0" stroke="#2a5f8c"/><use href="#redx" x="8" y="0" width="7" height="8"/><use href="#arrowcur" x="7" y="5" width="7" height="11"/></svg></button>
      <button class="s" aria-label="Select pinned"><svg viewBox="0 0 16 16"><path d="M3 1h8v2H10v4l2 2H2l2-2V3H3zM7 9v5" fill="#eaa15c" stroke="#9c5618"/><use href="#arrowcur" x="8" y="4" width="7" height="12"/></svg></button>
      <button class="s" aria-label="Select by face"><svg viewBox="0 0 16 16"><path d="M2 5l6-3v10l-6 3z" fill="#8fbfe0" stroke="#2a5f8c"/><use href="#redx" x="8" y="0" width="7" height="8"/><use href="#arrowcur" x="7" y="5" width="7" height="11"/></svg></button>
      <button class="s" aria-label="Drag on selection"><svg viewBox="0 0 16 16"><path d="M5 1v9M1 5h9M3 3l2-2 2 2M3 8l2 2 2-2" fill="none" stroke="#222"/><use href="#redx" x="8" y="0" width="7" height="8"/><use href="#arrowcur" x="7" y="5" width="7" height="11"/></svg></button>
      <button class="s" aria-label="Background processes"><svg viewBox="0 0 16 16"><circle cx="8" cy="8" r="5" fill="none" stroke="#a0a2a5" stroke-width="3" stroke-dasharray="3 1"/></svg></button>
      <button class="s wide" aria-label="Filter"><svg viewBox="0 0 16 16"><path d="M1 2h14L10 8v7l-4-2V8z" fill="#a9aebb" stroke="#55595f"/></svg>:0</button>
    </div>
  </footer>
</div>
</body>
</html>
```
FILE: styles.css
```css
* { box-sizing: border-box; }
body { margin: 0; font: 12px/16px Roboto, "Open Sans", sans-serif; color: #222; background: #ededed; }
h1, h2, p, ul { margin: 0; padding: 0; font: inherit; }
ul { list-style: none; }
svg { flex: none; }
button, input, select { font: inherit; color: inherit; margin: 0; padding: 0; border: 0; background: none; border-radius: 0; }
select { appearance: none; }
.defs { position: absolute; width: 0; height: 0; }

.app { display: flex; flex-direction: column; min-height: 100vh; }

/* title bar */
.titlebar { display: flex; justify-content: space-between; height: 28px; background: #cbcbcb; }
.quick { display: flex; align-items: center; height: 24px; }
.q, .q-arrow { display: flex; align-items: center; justify-content: center; width: 24px; height: 24px; color: #33363d; }
.q-arrow { width: 12px; }
.q-last { margin-left: 4px; }
.q-gap { margin-left: 6px; }
.q-text { font-size: 20px; font-weight: 700; }
.q-on { background: #b5d7f3; border: 1px solid #2d6da3; height: 22px; }
.q-sep { width: 1px; height: 20px; margin: 0 2px; background: #bababa; }
.title { padding: 2px 0 0 4px; color: #444; white-space: nowrap; }
.winctl { display: flex; height: 24px; align-items: center; }
.winctl .grow { width: 54px; }
.search { width: 162px; height: 25px; background: #fff; }
.help { width: 16px; height: 16px; margin: 0 8px 0 10px; border: 1px solid #24406b; border-radius: 8px; background: #f5f8fc; color: #2352a0; font-weight: 700; }

/* ribbon tabs */
.menu { display: flex; height: 21px; background: #cbcbcb; }
.menu button { height: 21px; padding: 0 10px; color: #333; }
.menu .tight { padding: 0 9px; }
.menu .file { width: 45px; margin-right: 3px; padding: 0; background: #2a77ad; color: #fff; }
.menu .on { width: 84px; padding: 0; background: #eee; color: #111; }
.menu .collapse { display: flex; align-items: center; padding-left: 20px; }

/* ribbon */
.ribbon { display: flex; height: 96px; background: #eee; border-bottom: 1px solid #c6c6c6; }
.panel { display: flex; flex-direction: column; border-right: 1px solid #dcdcdc; }
.panel:last-child { border-right: 0; }
.panel h2 { text-align: center; line-height: 18px; }
.panel h2 svg { margin-left: 4px; vertical-align: middle; }
.tools { display: flex; height: 76px; padding: 3px 0 0 2px; }
.tool { display: flex; flex-direction: column; align-items: center; height: 73px; padding-top: 3px; line-height: 15px; white-space: nowrap; position: relative; }
.tool > svg { width: 30px; height: 30px; }
.tool span { margin-top: 6px; }
.tool .dd { width: 6px; height: 4px; margin-top: 3px; }
.tool.side .dd { position: absolute; right: 2px; top: 50px; margin: 0; }
.tool:disabled { color: #a6a6a6; }
.modify { width: 44px; margin-left: 5px; padding-top: 2px; background: #b4d5f1; border: 1px solid #2f6ea6; }
.w28 { width: 28px; } .w36 { width: 36px; } .w38 { width: 38px; } .w40 { width: 40px; } .w42 { width: 42px; }
.w44 { width: 44px; } .w46 { width: 46px; } .w48 { width: 48px; } .w52 { width: 52px; } .w54 { width: 54px; }
.w56 { width: 56px; } .w62 { width: 62px; } .w88 { width: 88px; }
.p-select { width: 57px; }
.p-build { width: 568px; } .p-build .tools { padding-left: 3px; }
.p-circ { width: 140px; } .p-circ .tools { padding-left: 9px; }
.p-model { width: 137px; }
.p-room { width: 301px; } .p-room .tools { padding-left: 3px; }
.p-open { width: 209px; }
.p-datum { width: 83px; }
.p-work { width: 162px; }
.options { height: 26px; background: #eee; }

/* work area */
.work { display: flex; flex: 1; border-top: 2px solid #cbcbcb; background: #cbcbcb; }
.phead { display: flex; justify-content: space-between; align-items: center; height: 20px; padding: 0 3px 0 4px; background: #eee; }
.phead h2 { white-space: nowrap; }
.phead button { display: flex; color: #222; }

/* properties */
.props { display: flex; flex-direction: column; width: 304px; background: #f0f0f0; border-right: 1px solid #ddd; }
.type { display: flex; align-items: center; height: 71px; margin: 0 1px; padding: 2px; border: 1px solid #d0d0d0; }
.thumb { display: flex; align-items: center; justify-content: center; width: 66px; height: 66px; padding-left: 6px; border: 1px solid #ccc; }
.type p { flex: 1; margin-left: 4px; color: #444; }
.inst { display: flex; justify-content: space-between; height: 26px; padding: 3px 8px 2px 2px; }
.combo { display: flex; align-items: center; position: relative; width: 218px; background: #fff; border: 1px solid #d5d5d5; }
.combo select { flex: 1; height: 100%; padding-left: 3px; }
.combo svg { margin-right: 4px; }
.inst button { display: flex; align-items: center; gap: 5px; }
.grid { flex: 1; background: #fff; width: 302px; }
table { width: 302px; table-layout: fixed; border-spacing: 0; }
.c-name { width: 147px; } .c-end { width: 13px; }
tr { height: 18px; }
td { height: 18px; padding: 0 2px; border-bottom: 1px dotted #808080; border-right: 1px dotted #808080; line-height: 16px; color: #111; white-space: nowrap; vertical-align: top; }
td:first-child { padding: 0 0 0 8px; }
td.in { padding-left: 5px; }
.dim td { color: #858585; }
th { height: 18px; padding: 0 3px; background: #dadada; text-align: left; font-weight: 400; }
th svg { float: right; margin: 4px 3px 0 0; }
td input[type="text"] { display: block; width: 100%; height: 17px; padding: 0 3px; }
td input.boxed { border: 1px solid #000; }
td button { display: block; width: 100%; height: 15px; margin-top: 1px; line-height: 13px; border: 1px solid #d4d4d4; border-bottom-color: #a8a8a8; border-radius: 3px; background: #fdfdfd; }
input[type="checkbox"] { display: block; appearance: none; width: 13px; height: 13px; margin: 3px 0 0 1px; border: 1px solid #767676; border-radius: 3px; background: #f7f7f7; }
input[type="checkbox"]:checked { background: #0f5fa8; border-color: #0f5fa8; }
input[type="checkbox"]:checked::after { content: ""; display: block; width: 7px; height: 4px; margin: 2px; border: solid #fff; border-width: 0 0 1px 1px; transform: rotate(-45deg); }
.pfoot { display: flex; justify-content: space-between; align-items: center; height: 28px; padding: 0 5px 0 3px; background: #ededed; }
.pfoot a { color: #1c5c9c; }
.pfoot button { width: 70px; height: 19px; border-radius: 3px; background: #f7f7f7; color: #888; }

/* view */
.view { display: flex; flex-direction: column; flex: 1; min-width: 0; margin-left: 2px; }
.tabs { display: flex; height: 20px; }
.tabs button { display: flex; align-items: center; flex: 0 0 128px; padding-left: 5px; color: #444; }
.tabs button > svg:first-child { margin-right: 6px; color: #77797d; }
.tabs .t1 { flex-basis: 195px; }
.tabs .t2 { flex-basis: 151px; }
.tabs .on { background: #fff; color: #111; font-weight: 700; }
.tabs .on > svg:first-child { color: #2f333b; }
.tabs .x { margin: 0 4px 0 auto; }
.tabs .more { flex: 0 0 20px; margin-left: auto; padding: 0 5px; }
.tabs .more > svg:first-child { margin: 0; }
.stage { display: flex; flex: 1; }
.canvas { position: relative; flex: 1; background: #fff; }
.drawing { display: block; width: 100%; height: 100%; }
.ink { fill: none; stroke: #000; stroke-width: 1; }
.rail { fill: none; stroke-width: 4; }
.rail .core { stroke: #fff; stroke-width: 2; }
.heads { fill: none; stroke: #234a6c; }
.heads .solid { fill: #0b3d91; stroke: none; }
.heads .cut { stroke: #fff; }
.lvl { font: 9px "Liberation Sans", sans-serif; text-anchor: end; fill: #222; }
.bub { font: 14px "Liberation Sans", sans-serif; text-anchor: middle; fill: #222; }
.navbar { position: absolute; top: 2px; right: 1px; width: 36px; height: 118px; display: flex; flex-direction: column; align-items: center; justify-content: space-between; padding: 2px; border: 2px solid #c9c9c9; border-radius: 6px; background: #f4f4f4; }
.navbar button { display: flex; color: #999; }
.navbar .r { align-self: flex-end; }
.navbar hr { width: 26px; margin: 0; border: 0; border-top: 1px solid #c9c9c9; }
.two { font: 700 10px Roboto, sans-serif; fill: #6b9cc4; }
.vscroll { display: flex; align-items: center; justify-content: center; width: 18px; background: #eee; }
.vscroll span { width: 2px; height: 17px; background: #858585; }
.viewbar { display: flex; align-items: center; height: 19px; background: #efefef; padding: 0 5px 2px 0; }
.scale { width: 79px; padding-left: 29px; }
.viewbar button { display: flex; justify-content: center; width: 21px; }
.viewbar button svg { width: 16px; height: 14px; }
.hthumb { width: 17px; height: 2px; margin: 0 auto; background: #858585; }

/* browser */
.browser { width: 302px; margin-left: 3px; background: #fff; }
.browser .phead { padding-right: 1px; }
.tree li { position: relative; line-height: 18px; white-space: nowrap; color: #111; }
.tree ul { margin-left: 20px; }
.tree li::before { content: ""; position: absolute; left: 9px; top: 0; bottom: 0; border-left: 1px dotted #999; }
.tree li:last-child::before { bottom: auto; height: 9px; }
.tree > li:first-child::before { top: 9px; }
.tree li::after { content: ""; position: absolute; left: 10px; top: 9px; width: 13px; border-top: 1px dotted #999; }
.tree span { display: inline-block; height: 18px; margin-left: 24px; padding: 0 3px; vertical-align: top; }
.tree .ti { position: absolute; left: 22px; top: 2px; width: 16px; height: 14px; z-index: 1; background: #fff; }
.tree .ti + span { margin-left: 40px; }
.tree .ex { position: absolute; left: 5px; top: 5px; z-index: 1; width: 9px; height: 9px; border: 1px solid #8a94a3; background: #fff; line-height: 7px; font-size: 9px; color: #223a66; }
.tree .cur { background: #e0e0e0; font-weight: 700; }

/* status bar */
.status { display: flex; align-items: center; height: 25px; background: #cbcbcb; border-bottom: 1px solid #222; padding-right: 48px; }
.status p { width: 1535px; padding-left: 2px; color: #111; }
.s { display: flex; align-items: center; width: 26px; color: #333; }
.s svg { width: 16px; height: 16px; }
.s.wide { width: 46px; gap: 1px; }
.s.requests { width: 54px; margin-left: 8px; }
.status .combo { width: 204px; height: 18px; border: 0; color: #777; }
.filters { display: flex; margin-left: auto; }
```
